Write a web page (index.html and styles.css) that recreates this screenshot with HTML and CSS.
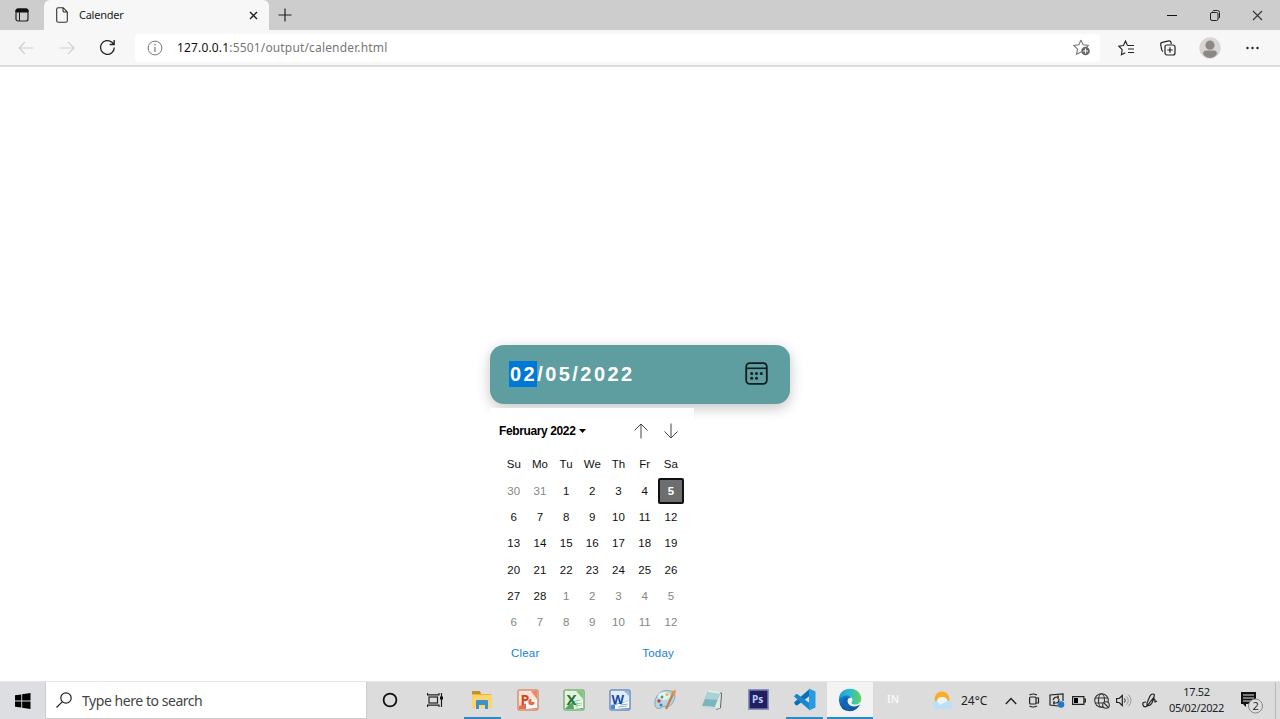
FILE: index.html
```html
<!DOCTYPE html>
<html lang="en">
<head>
<meta charset="utf-8">
<title>Calender</title>
<link rel="stylesheet" href="styles.css">
</head>
<body>
<div class="screen">
  <header class="tabstrip">
    <div class="tab-actions"><svg width="14" height="14" viewBox="0 0 14 14"><rect x="1" y="1" width="12" height="12" rx="2" fill="none" stroke="#222" stroke-width="1.2"/><path d="M1 4V2.5Q1 1 2.5 1h9Q13 1 13 2.500V4z" fill="#111" stroke="#111"/><path d="M4.500 4v9" stroke="#222"/></svg></div>
    <div class="tab">
      <svg width="12" height="16" viewBox="0 0 12 16" fill="none" stroke="#333" stroke-width="1.1"><path d="M.7 2.200Q.7.700 2.200.7h5L11.300 5v8.800q0 1.500-1.500 1.500H2.200Q.7 15.300.7 13.800zM7 .7v3q0 1.300 1.300 1.300h3"/></svg>
      <span class="tab-title">Calender</span>
      <svg class="tab-close" width="9" height="9" viewBox="0 0 9 9"><path d="M1 1l7 7M8 1L1 8" stroke="#222" stroke-width="1.400"/></svg>
    </div>
    <div class="new-tab"><svg width="14" height="14" viewBox="0 0 14 14"><path d="M7 .5v13M.5 7h13" stroke="#222" stroke-width="1.200"/></svg></div>
    <div class="window-buttons">
      <span><svg width="10" height="10" viewBox="0 0 10 10"><path d="M0 5.500h10" stroke="#111"/></svg></span>
      <span><svg width="10" height="11" viewBox="0 0 10 11" fill="none" stroke="#222"><rect x=".5" y="2.500" width="7.500" height="8" rx="1.500"/><path d="M2.500 1.500Q3 .5 4 .5h3.500q2 0 2 2V7q0 1-1 1.500"/></svg></span>
      <span><svg width="11" height="11" viewBox="0 0 11 11"><path d="M1 1l9 9M10 1l-9 9" stroke="#333" stroke-width="1.100"/></svg></span>
    </div>
  </header>
  <nav class="toolbar">
    <span class="nav-button"><svg width="16" height="14" viewBox="0 0 16 14" fill="none" stroke="#cfcfcf" stroke-width="1.200"><path d="M15.500 7H1M7 1L1 7l6 6"/></svg></span>
    <span class="nav-button"><svg width="16" height="14" viewBox="0 0 16 14" fill="none" stroke="#cfcfcf" stroke-width="1.200"><path d="M.5 7H15M9 1l6 6-6 6"/></svg></span>
    <span class="nav-button"><svg width="17" height="17" viewBox="0 0 17 17" fill="none" stroke="#222" stroke-width="1.300"><path d="M15.300 8.500A6.900 6.900 0 1 1 13 3.300L15 5.200M15.200 1v4.500h-4.500"/></svg></span>
    <div class="address">
      <svg width="16" height="16" viewBox="0 0 16 16" fill="none" stroke="#777"><circle cx="8" cy="8" r="6.900"/><path d="M8 7v5M8 4v1.500" stroke-width="1.200"/></svg>
      <span class="url"><b>127.0.0.1</b>:5501/output/calender.html</span>
      <svg class="add-favorite" width="18" height="17" viewBox="0 0 18 17"><path d="M8 1l2.100 4.700 5.200.7-2.500 2.800M8 1L5.900 5.700.8 6.400l3.700 3.700-1 5.200L8 13" fill="none" stroke="#777" stroke-width="1.100"/><circle cx="12.500" cy="12" r="4.300" fill="#666"/><path d="M12.500 9.500v5M10 12h5" stroke="#fff"/></svg>
    </div>
    <div class="tools">
      <span><svg width="17" height="16" viewBox="0 0 17 16" fill="none" stroke="#222" stroke-width="1.100"><path d="M9.500 5.500L7.500 1 5.400 5.500.8 6.200l3.400 3.500-.8 5 3.900-2M9.500 5.500H16M10 9h6M10 12.500h6"/></svg></span>
      <span><svg width="16" height="16" viewBox="0 0 16 16" fill="none" stroke="#222" stroke-width="1.200"><rect x="5" y="5" width="10" height="10" rx="2"/><path d="M10 7.300v5.400M7.300 10h5.400M3 11.500Q1.700 10.600 1.500 9L.7 4.500Q.5 2.700 2.200 2.300L8.800.8q1.800-.2 2.300 1.600V4"/></svg></span>
      <span><svg width="22" height="22" viewBox="0 0 22 22"><circle cx="11" cy="11" r="10.700" fill="#d8d6d4"/><circle cx="11" cy="8.200" r="4.600" fill="#8c8885"/><path d="M4 17q0-3.500 3-3.500h8q3 0 3 3.500-2.500 4-7 4t-7-4" fill="#8c8885"/></svg></span>
      <span><svg width="13" height="4" viewBox="0 0 13 4"><g fill="#222"><circle cx="1.500" cy="2" r="1.200"/><circle cx="6.500" cy="2" r="1.200"/><circle cx="11.500" cy="2" r="1.200"/></g></svg></span>
    </div>
  </nav>
  <main class="page">
    <div class="date-widget">
      <div class="date-field">
        <span class="date-text"><mark>02</mark>/05/2022</span>
        <svg width="23" height="23" viewBox="0 0 23 23" fill="none" stroke="#111d1e" stroke-width="1.800"><rect x="1.200" y="1.200" width="20.600" height="20.600" rx="3.500"/><path d="M1.200 6.300h20.600" stroke-width="1.600"/><g fill="#111d1e" stroke="none"><circle cx="6.700" cy="11.500" r="1.500"/><circle cx="11.500" cy="11.500" r="1.500"/><circle cx="16.300" cy="11.500" r="1.500"/><circle cx="6.700" cy="16.300" r="1.500"/><circle cx="11.500" cy="16.300" r="1.500"/></g></svg>
      </div>
      <section class="picker">
        <div class="picker-head">
          <span class="month">February 2022</span>
          <svg class="caret" width="7" height="4" viewBox="0 0 7 4"><path d="M0 0h7L3.500 4z"/></svg>
          <svg class="arrow-up" width="14" height="16" viewBox="0 0 14 16" fill="none" stroke="#444"><path d="M7 15.500V1M.5 7.500L7 1l6.500 6.500"/></svg>
          <svg class="arrow-down" width="14" height="16" viewBox="0 0 14 16" fill="none" stroke="#444"><path d="M7 .5V15M.5 8.500L7 15l6.500-6.500"/></svg>
        </div>
        <div class="grid weekdays"><span>Su</span><span>Mo</span><span>Tu</span><span>We</span><span>Th</span><span>Fr</span><span>Sa</span></div>
        <div class="grid days">
          <span class="dim">30</span><span class="dim">31</span><span>1</span><span>2</span><span>3</span><span>4</span><span class="selected">5</span>
          <span>6</span><span>7</span><span>8</span><span>9</span><span>10</span><span>11</span><span>12</span>
          <span>13</span><span>14</span><span>15</span><span>16</span><span>17</span><span>18</span><span>19</span>
          <span>20</span><span>21</span><span>22</span><span>23</span><span>24</span><span>25</span><span>26</span>
          <span>27</span><span>28</span><span class="dim">1</span><span class="dim">2</span><span class="dim">3</span><span class="dim">4</span><span class="dim">5</span>
          <span class="dim">6</span><span class="dim">7</span><span class="dim">8</span><span class="dim">9</span><span class="dim">10</span><span class="dim">11</span><span class="dim">12</span>
        </div>
        <div class="picker-foot"><a>Clear</a><a>Today</a></div>
      </section>
    </div>
  </main>
  <footer class="taskbar">
    <div class="start"><svg width="16" height="16" viewBox="0 0 16 16"><path d="M0 2.300L6.300 1.400V7.500H0zM7.200 1.300L15.500 0v7.500H7.200zM0 8.400h6.300v6.200L0 13.700zM7.200 8.400h8.300V16l-8.300-1.300z"/></svg></div>
    <div class="search"><svg width="16" height="16" viewBox="0 0 16 16" fill="none" stroke="#222" stroke-width="1.200"><circle cx="10" cy="6" r="5.200"/><path d="M6.200 9.800L.5 15.500"/></svg><span>Type here to search</span></div>
    <div class="slot cortana"><svg width="16" height="16" viewBox="0 0 16 16"><circle cx="8" cy="8" r="6.400" fill="none" stroke="#111" stroke-width="1.800"/></svg></div>
    <div class="slot taskview"><svg width="17" height="14" viewBox="0 0 17 14" fill="none" stroke="#222" stroke-width="1.200"><rect x="2" y="4" width="8.500" height="6"/><path d="M.6 0v1.800h11.400V0M.6 14v-1.800h11.400V14M14.500 0v14"/><path d="M13 3.500h3v3h-3z" fill="#111" stroke="none"/></svg></div>
    <div class="slot open"><svg width="20" height="18" viewBox="0 0 20 18"><path d="M0 1h7l2 2h10v14H0z" fill="#e9b43e"/><path d="M0 4h20v13H0z" fill="#fcd56b"/><path d="M0 0h8l1 3H0z" fill="#c89024"/><path d="M4 18v-8q0-1 1-1h10q1 0 1 1v8h-3v-4H7v4z" fill="#3c91cf"/></svg></div>
    <div class="slot"><svg width="22" height="22" viewBox="0 0 22 22"><rect x="1" y="1" width="20" height="20" rx="1" fill="#fae4da" stroke="#d3623f"/><path d="M14 2h6v8z" fill="#eb8767"/><path d="M2 17l9-3 9-2v8H2z" fill="#e56f4c"/><path d="M9 13l11-2v8l-11 1z" fill="#fff"/><circle cx="14.500" cy="13" r="3.200" fill="#e46c49"/><path d="M14.500 13V9.500a3.500 3.500 0 0 1 3.500 3.500z" fill="#fff"/><text x="3.500" y="15.500" class="app-letter ppt">P</text></svg></div>
    <div class="slot"><svg width="22" height="22" viewBox="0 0 22 22"><rect x="1" y="1" width="20" height="20" rx="1" fill="#e5f2e1" stroke="#469852"/><path d="M13 2h7v8z" fill="#83c77e"/><path d="M2 20q9-11 18-8v8z" fill="#55a65a"/><path d="M10 13l10-2v8l-9 1z" fill="#f3fff0"/><path d="M12 15l7-1M12 17l7-1M14 13v6" stroke="#83b783" stroke-width=".7"/><text x="3.500" y="15.500" class="app-letter excel">X</text></svg></div>
    <div class="slot"><svg width="22" height="22" viewBox="0 0 22 22"><rect x="1" y="1" width="20" height="20" rx="1" fill="#e1edfb" stroke="#3867ae"/><path d="M15 2h5v5z" fill="#8eb8ea"/><path d="M2 16l18-4v8H2z" fill="#4e86cf"/><path d="M6 16l14-4v7l-14 1z" fill="#fff"/><path d="M11 16l8-1M9 18l9-1" stroke="#96abc9"/><text x="2.500" y="14.500" class="app-letter word">W</text></svg></div>
    <div class="slot"><svg width="24" height="22" viewBox="0 0 24 22"><path d="M3 7Q8-.5 17 2q6 3 3 9-3 7-7 7-3-2-6 1-5 2-6-3Q0 11 3 7" fill="#b7d5e3" stroke="#87a9bd"/><ellipse cx="10" cy="7" rx="6" ry="4" fill="#e2f1f7"/><circle cx="5" cy="12" r="1.700" fill="#ca4141"/><circle cx="8" cy="8" r="1.500" fill="#54a456"/><circle cx="13" cy="5.500" r="1.500" fill="#e4bb3e"/><circle cx="7" cy="16" r="1.500" fill="#3d83c1"/><path d="M19 5L12 20" stroke="#ca8244" stroke-width="2.300"/><path d="M17 5l1-3 4-1-1 5z" fill="#d79654"/></svg></div>
    <div class="slot"><svg width="22" height="22" viewBox="0 0 22 22"><path d="M18 3l3 1-1 15-5 2z" fill="#536368"/><path d="M7 2l12 2-5 14-13-1z" fill="#79b5bd"/><path d="M7 2l12 2-2.500 7L4 10z" fill="#a8d2d5"/><path d="M19 4l1 1-1 14-4 1-1-2z" fill="#e1e7e4"/><path d="M1 17l13 1v2L2 19z" fill="#cbdada"/><path d="M7 2l12 2" stroke="#e2f0ef" stroke-width="1.500"/></svg></div>
    <div class="slot"><svg width="21" height="21" viewBox="0 0 21 21"><rect x=".8" y=".8" width="19.400" height="19.400" fill="#211e61" stroke="#8794bd" stroke-width="1.600"/><text x="4" y="14" class="app-letter ps">Ps</text></svg></div>
    <div class="slot open"><svg width="23" height="23" viewBox="0 0 23 23"><path d="M1 14.500L16.500 1v7L4 17.500l-1.500-.5z" fill="#0870b9"/><path d="M1 8.500L3 6l1.500.2L16.500 15v7z" fill="#1788cf"/><path d="M16 .5l6.500 3v16L16 22.500z" fill="#299be0"/></svg></div>
    <div class="slot active"><svg width="24" height="24" viewBox="0 0 24 24"><defs><linearGradient id="edge-top"><stop stop-color="#229dda"/><stop offset=".55" stop-color="#30bfc5"/><stop offset="1" stop-color="#68d456"/></linearGradient><linearGradient id="edge-base" x2="0" y2="1"><stop stop-color="#1685d4"/><stop offset="1" stop-color="#0b4e9d"/></linearGradient></defs><path d="M1 11Q3 5 10 6.500L14 10q-4-1-4.500 3Q10 18 16 18.500q3 0 6-2Q19 23 12 23.300 2 23 1 13z" fill="url(#edge-base)"/><path d="M.8 12C1 4 6 .7 12 .7c7 0 11.300 5 11.300 9.800 0 4-3 6-6.300 6-3 0-4.300-1.200-3-2.800 1.500-2.400-.5-6.200-5-6.200-4 0-7 1.500-8.200 4.500" fill="url(#edge-top)"/><path d="M7 9Q2.500 14.500 8 20.500q3.500 2.800 7 2-5-2-6-6.500-.5-4 1-6z" fill="#1464af"/></svg></div>
    <div class="language">IN</div>
    <div class="weather"><svg width="21" height="19" viewBox="0 0 21 19"><circle cx="10" cy="8" r="7.500" fill="#f9ae27"/><path d="M5 18q-4.500 0-4.500-4t4.500-4q1-4 5-4 4.500 0 5.500 4 5 0 5 4t-5 4z" fill="#bcdff7"/><path d="M5 10q1-4 5-4 4.500 0 5.500 4L8 14z" fill="#e9f7fd"/></svg><span>24°C</span></div>
    <div class="tray">
      <span class="chevron"><svg width="12" height="8" viewBox="0 0 12 8"><path d="M.8 7L6 1.500 11.200 7" fill="none" stroke="#222" stroke-width="1.400"/></svg></span>
      <span><svg width="12" height="15" viewBox="0 0 12 15" fill="none" stroke="#222" stroke-width="1.200"><rect x="1.600" y="4" width="6.400" height="7" rx="1"/><path d="M8 5h2.500v5H8M1.500 2Q5 0 9 2M1.500 13Q5 15 9 13"/></svg></span>
      <span><svg width="16" height="15" viewBox="0 0 16 15" fill="none" stroke="#222" stroke-width="1.200"><path d="M9 13L1 12V2l13-1v7M4 7q1-3 4-3h2M9 2.500V6M10 6q0 4-3 4H4M5 8v3.500"/><circle cx="12" cy="11.500" r="3.300" fill="#2477c8" stroke="none"/></svg></span>
      <span><svg width="14" height="9" viewBox="0 0 14 9"><path d="M.6.600h11.300v7.800H.6zM12 3h1.400v3H12" fill="none" stroke="#222" stroke-width="1.200"/><path d="M2 2h4v5H2z"/></svg></span>
      <span><svg width="16" height="16" viewBox="0 0 16 16" fill="none" stroke="#333" stroke-width="1.100"><circle cx="7.500" cy="7.500" r="6.800"/><ellipse cx="7.500" cy="7.500" rx="3" ry="6.800"/><path d="M1.500 5h12M1.500 10h12"/><circle cx="12" cy="12" r="3.300" fill="#ddd"/><path d="M10 10l4 4"/></svg></span>
      <span><svg width="16" height="13" viewBox="0 0 16 13" fill="none" stroke="#222"><path d="M.6 4.500h2.600L6.300 1.500v10L3.200 8.500H.6z" stroke-width="1.200"/><path d="M8.500 4.500q1.500 2 0 4"/><path d="M10.500 2.500q3.500 4 0 8M12.500.8q5 5.700 0 11.400" stroke="#999"/></svg></span>
      <span class="pen"><svg width="16" height="16" viewBox="0 0 16 16" fill="none" stroke="#222" stroke-width="1.200"><path d="M4 9Q0 9 1 12q1 3 4 1L12 4q1-3-1-3-2 0-3 2L5 10v3q3 0 5-3l2-6M10 9q3-5 3-1-1 2 2 0"/></svg></span>
    </div>
    <div class="clock"><span>17.52</span><span>05/02/2022</span></div>
    <div class="notifications"><svg width="24" height="23" viewBox="0 0 24 23"><path d="M1 1h15v12H6v3l-3-3H1z" fill="#111"/><path d="M3 4h11M3 7h11M3 10h8" stroke="#ddd" stroke-width="1.100"/><circle cx="15.500" cy="15" r="7" fill="#dedede" stroke="#888"/><text x="12.500" y="19" class="badge-number">2</text></svg></div>
    <div class="show-desktop"></div>
  </footer>
</div>
</body>
</html>
```

FILE: styles.css
```css
* { box-sizing: border-box; }
body { margin: 0; background: #fff; font-family: "Noto Sans", sans-serif; color: #222; overflow: hidden; }
svg { display: block; flex: none; }
.screen { width: 1280px; height: 719px; display: flex; flex-direction: column; }
.tabstrip { display: flex; height: 30px; flex: none; background: #cdcdcd; align-items: stretch; }
.tab-actions { width: 44px; display: flex; align-items: center; padding-left: 15px; }
.tab { width: 225px; display: flex; align-items: center; padding: 0 11px 0 12px; background: #f7f7f7; border-radius: 6px 6px 0 0; }
.tab-title { margin-left: 11px; font-size: 11px; letter-spacing: -.25px; line-height: 16px; }
.tab-close { margin-left: auto; }
.new-tab { width: 32px; display: grid; place-items: center; }
.window-buttons { display: flex; margin-left: auto; margin-right: 1px; }
.window-buttons span { width: 43px; display: grid; place-items: center; }
.toolbar { height: 37px; flex: none; display: flex; align-items: center; background: #f7f7f7; border-bottom: 2px solid #dcdcdc; padding-left: 5px; }
.nav-button { width: 41px; display: grid; place-items: center; }
.address { display: flex; align-items: center; margin-left: 7px; width: 965px; height: 28px; padding: 0 9px 0 12px; background: #fff; border-radius: 3px; }
.url { margin-left: 14px; font-size: 12px; letter-spacing: .16px; color: #777; white-space: nowrap; }
.url b { color: #111; font-weight: 400; }
.add-favorite { margin-left: auto; }
.tools { display: flex; margin-left: 5px; }
.tools span { width: 42px; display: grid; place-items: center; }
.page { flex: 1; display: flex; justify-content: center; align-items: flex-start; padding-top: 278px; }
.date-widget { width: 300px; font-family: "Liberation Sans", Arial, sans-serif; }
.date-field { height: 59px; display: flex; align-items: center; justify-content: space-between; padding: 0 22px 2px 19px; background: #5f9ea0; border-radius: 14px; box-shadow: 0 4px 14px rgba(0,0,0,.23); }
.date-text { color: #fff; font-size: 20px; letter-spacing: 2.450px; line-height: 26px; font-weight: 700; }
.date-text mark { display: inline-block; background: #0078d7; color: #fff; padding-left: 1px; }
.picker { position: relative; width: 204px; height: 264px; margin-top: 4px; background: #fff; font-size: 11.500px; color: #111; }
.picker-head { display: flex; align-items: center; height: 45px; padding: 0 16px 0 9px; }
.month { font-weight: 700; font-size: 12px; letter-spacing: -.38px; color: #000; }
.caret { margin-left: 4px; margin-top: 1px; }
.arrow-up { margin-left: auto; }
.arrow-down { margin-left: 16px; }
.grid { display: grid; grid-template-columns: repeat(7, 26.2px); margin-left: 10.700px; }
.grid span { display: grid; place-items: center; letter-spacing: .1px; }
.weekdays { height: 22px; font-size: 11.500px; }
.days { grid-template-rows: repeat(6, 26.2px); margin-top: 3px; }
.grid .dim { color: #858585; }
.grid .selected { color: #fff; background: #6e6e6e; border: 2px solid #111; border-radius: 2px; font-weight: 700; }
.picker-foot { display: flex; justify-content: space-between; padding: 11px 20px 0 21px; color: #1581d6; font-size: 11.500px; line-height: 14px; letter-spacing: .2px; }
.taskbar { height: 38px; flex: none; display: flex; align-items: stretch; background: #dcdcdc; border-top: 1px solid #e5e5e5; }
.start { width: 46px; display: grid; place-items: center; background: #dcdee1; border-right: 1px solid #ccc; }
.search { width: 321px; display: flex; align-items: center; padding-left: 10px; background: #fff; border: 1px solid #ccc; border-left: 0; border-top: 0; font-size: 14px; color: #444; }
.search span { margin-left: 10px; letter-spacing: -.45px; }
.slot { width: 46px; display: grid; place-items: center; position: relative; }
.slot svg { margin-bottom: 2px; }
.cortana { width: 45px; }
.taskview { width: 47px; }
.open::after, .active::after { content: ""; position: absolute; bottom: 0; left: 5px; right: 4px; height: 2px; background: #278dc8; }
.active { background: #f3f3f3; }
.active::after { left: 0; right: 0; }
.app-letter { font-family: "Open Sans", sans-serif; font-weight: 700; }
.ppt { font-size: 14px; fill: #d34520; }
.excel { font-size: 15px; fill: #26763a; }
.word { font-size: 13px; fill: #194a9b; }
.ps { font-size: 10px; fill: #b9cff7; }
.language { width: 40px; display: grid; place-items: center; padding-bottom: 5px; font-size: 11px; color: #fff; }
.weather { display: flex; align-items: center; width: 86px; padding-left: 19px; font-size: 12px; }
.weather span { margin-left: 8px; }
.tray { display: flex; }
.tray span { width: 22.500px; display: grid; place-items: center; }
.tray .chevron { width: 24px; }
.tray .pen { width: 28px; }
.clock { width: 60px; display: flex; flex-direction: column; align-items: center; justify-content: center; margin-left: 3px; padding-bottom: 2px; font-size: 11px; line-height: 16px; letter-spacing: -.35px; }
.notifications { width: 48px; display: flex; align-items: center; padding: 3px 0 0 13px; }
.badge-number { font: 11px "Open Sans", sans-serif; fill: #222; }
.show-desktop { border-left: 1px solid #bbb; width: 5px; }
```
